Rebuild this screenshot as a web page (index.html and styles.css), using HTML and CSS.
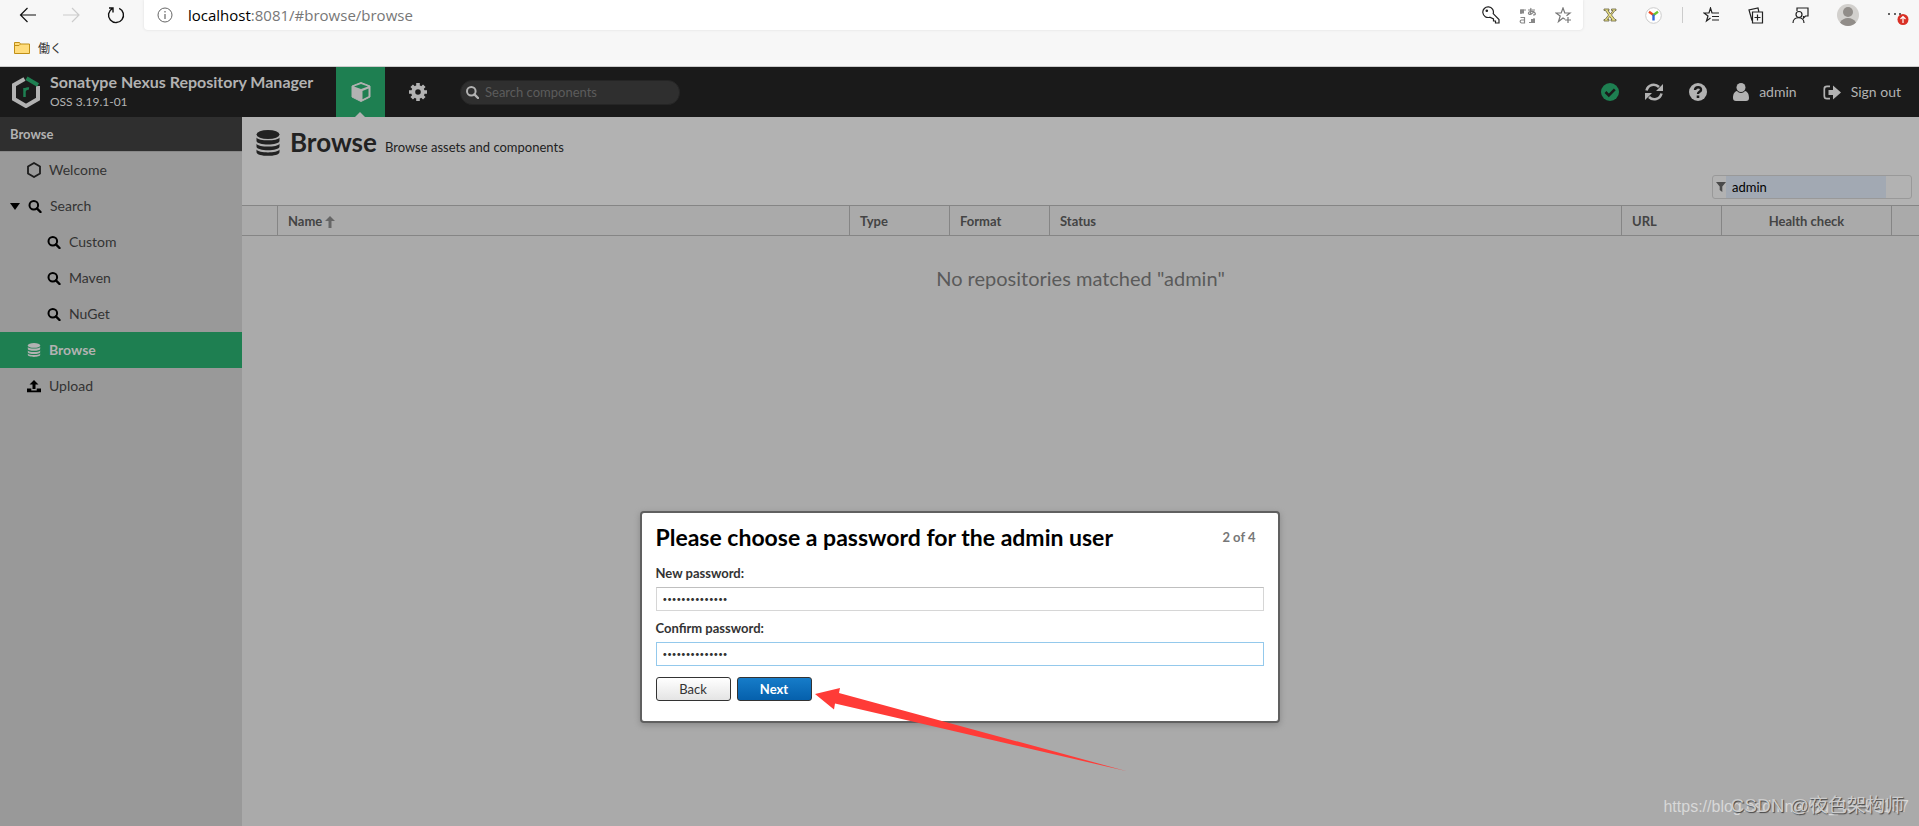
FILE: index.html
```html
<!DOCTYPE html>
<html lang="en">
<head>
<meta charset="utf-8">
<title>Browse - Nexus Repository Manager</title>
<link rel="stylesheet" href="styles.css">
</head>
<body>
<svg class="defs" width="0" height="0" aria-hidden="true">
  <symbol id="search" viewBox="0 0 13 13"><circle cx="5.3" cy="5.3" r="4.3" fill="none" stroke="currentColor" stroke-width="2"/><path d="M8.4 8.4l3.6 3.6" stroke="currentColor" stroke-width="2.4" stroke-linecap="round"/></symbol>
  <symbol id="db" viewBox="0 0 24 26"><g fill="currentColor"><ellipse cx="12" cy="4.5" rx="11.5" ry="4.5"/><path d="M.5 7.5c2 3.8 21 3.800 23 0v3.200c0 5-23 5-23 0zM.5 13.700c2 3.800 21 3.800 23 0v2.800c0 5-23 5-23 0zM.5 19.600c2 3.800 21 3.800 23 0v2.300c0 5.200-23 5.200-23 0z"/></g></symbol>
</svg>

<div class="browser">
  <div class="toolbar">
    <div class="nav">
      <button aria-label="Back"><svg width="18" height="16" viewBox="0 0 18 16" fill="none" stroke="#111" stroke-width="1.2"><path d="M17 8H2M8.500 1L1.500 8l7 7"/></svg></button>
      <button aria-label="Forward"><svg width="18" height="16" viewBox="0 0 18 16" fill="none" stroke="#ccc" stroke-width="1.2"><path d="M0 8h15M9 1l7 7-7 7"/></svg></button>
      <button aria-label="Reload"><svg width="18" height="18" viewBox="0 0 18 18" fill="none" stroke="#111" stroke-width="1.4"><path d="M12.200 2.300a7.500 7.500 0 1 1-7 .300M2 2h4v4.500"/></svg></button>
    </div>
    <div class="address">
      <svg width="16" height="16" viewBox="0 0 16 16" fill="none" stroke="#666"><circle cx="8" cy="8" r="7"/><path d="M8 7v5M8 4v1.500" stroke-width="1.2"/></svg>
      <a class="url" href="#browse/browse"><b>localhost</b>:8081/#browse/browse</a>
      <div class="address-tools">
        <svg width="18" height="18" viewBox="0 0 18 18" fill="none" stroke="#222" stroke-width="1.200"><path d="M7.800 11.200a5.300 5.300 0 1 1 3.400-3.500L17 13.500V17h-3.500v-2H11.500v-2z"/><circle cx="4.800" cy="4.800" r=".7"/></svg>
        <svg width="17" height="17" viewBox="0 0 17 17" fill="none" stroke="#888" stroke-width="1.200"><path d="M2 7V3h5M9 3h7M12 1c-1 3-.5 5 0 6.500M15 4c-1 3-5 4.500-5.500 2.500s4-3 6-1 0 2.500-1.500 2.500M1.500 10.500h4v5.500h-3c-2-.5-1.500-3 0-3h3M10 15.500h5V11"/><path d="M1 2.500h4v4H1zM12 12h4v4h-4z" fill="#888" stroke="none"/></svg>
        <svg width="17" height="17" viewBox="0 0 17 17" fill="none" stroke="#777" stroke-width="1.200"><path d="M10 12.200L8 11l-4.500 3.500 1.700-5.500L1 6h5.200L8 1l1.800 5H15l-3.500 2.800M10 13h6M13 10v6"/></svg>
      </div>
    </div>
    <div class="extensions">
      <svg width="14" height="14" viewBox="0 0 14 14"><path d="M1 1h5v1.500H5L7.500 6 10 2.500H8.500V1H13v1.500h-1L8.500 7l3.500 4.500h1V13H8v-1.500h1L6.700 8.500 4.500 11.500H6V13H1v-1.500h1L5.600 7 2.500 2.500H1z" fill="#e8df83" stroke="#665f43" stroke-width=".8"/></svg>
      <svg width="17" height="17" viewBox="0 0 17 17" fill="none" stroke-width="2.400"><circle cx="8.500" cy="8.500" r="7.800" fill="#fff" stroke="#ccc" stroke-width="1"/><path d="M8.500 8L4 4.800" stroke="#f04a23"/><path d="M8.500 8L13 4.800" stroke="#6cc62f"/><path d="M8.500 7.500v6" stroke="#3468dc"/></svg>
      <span class="divider"></span>
      <svg width="17" height="16" viewBox="0 0 17 16" fill="none" stroke="#222" stroke-width="1.200"><path d="M7.500 11L3.500 14 5 9 1 6h5l1.500-5L9 6h7M9 9.500h7M9 13h7"/></svg>
      <svg width="16" height="17" viewBox="0 0 16 17" fill="none" stroke="#222" stroke-width="1.200"><path d="M4 13.500L1 3l9-2 .8 3.500M4.500 5h10v11h-10zM9.500 7.500v6M6.500 10.500h6"/></svg>
      <svg width="17" height="17" viewBox="0 0 17 17" fill="none" stroke="#222" stroke-width="1.200"><path d="M5 4V1h11v8h-2.500l-2 2V9"/><circle cx="7" cy="7.500" r="3"/><path d="M1 16c0-7 11-7 11 0"/></svg>
      <svg width="22" height="22" viewBox="0 0 22 22"><circle cx="11" cy="11" r="11" fill="#d2d0cd"/><circle cx="11" cy="8" r="5" fill="#918d89"/><path d="M3 18.500c3-6 13-6 16 0a11 11 0 0 1-16 0" fill="#918d89"/></svg>
      <svg width="22" height="22" viewBox="0 0 22 22"><g fill="#333"><circle cx="2" cy="10" r="1"/><circle cx="8" cy="10" r="1"/><circle cx="13" cy="10" r="1"/></g><circle cx="16" cy="15.500" r="5.500" fill="#d93025"/><path d="M16 19v-6M13.500 15l2.500-2.500 2.500 2.500" fill="none" stroke="#fff" stroke-width="1.200"/></svg>
    </div>
  </div>
  <div class="bookmarks">
    <svg width="16" height="12" viewBox="0 0 16 12"><path d="M.5 11.500V.5h5l1 1.500h9v9.500z" fill="#ffdc7c" stroke="#c08f16"/><path d="M.5 3.500H5L6.500 2" fill="none" stroke="#c08f16"/></svg>
    <span>働く</span>
  </div>
</div>

<header class="header">
  <svg class="logo" width="28" height="32" viewBox="0 0 28 32" fill="none" stroke-width="4"><path d="M12.500 3L2 9v14l12 7 12-7V10" stroke="#b2b2b2"/><path d="M14.500 2.300L26 9" stroke="#1e7f51"/><path d="M12.500 21v-9M12.500 15q1-3 4.500-2.500" stroke="#1e7f51" stroke-width="2.500"/></svg>
  <div class="product"><strong>Sonatype Nexus Repository Manager</strong><span>OSS 3.19.1-01</span></div>
  <button class="mode active" aria-label="Browse mode"><svg width="20" height="20" viewBox="0 0 20 20"><path d="M10 .5l9 3.500v11l-9 4.500L1 15V4z" fill="#b2b2b2" stroke="#b2b2b2" stroke-linejoin="round"/><path d="M3 4.500L10 2l7 2.500L10 7z" fill="#1e7f51"/><path d="M11.500 9l6-2.500v7.700l-6 3z" fill="#1e7f51"/></svg></button>
  <button class="mode" aria-label="Administration"><svg width="18" height="18" viewBox="0 0 18 18"><circle cx="9" cy="9" r="4.800" fill="none" stroke="#b2b2b2" stroke-width="4"/><path d="M9 0v4M9 14v4M0 9h4M14 9h4M2.700 2.700l2.500 2.500M12.800 12.800l2.500 2.500M15.300 2.700l-2.500 2.500M5.200 12.800l-2.500 2.500" stroke="#b2b2b2" stroke-width="3.600"/></svg></button>
  <label class="search"><svg width="13" height="13"><use href="#search"/></svg><input type="search" placeholder="Search components" aria-label="Search components"></label>
  <div class="actions">
    <button aria-label="Status"><svg width="18" height="18" viewBox="0 0 18 18"><circle cx="9" cy="9" r="9" fill="#1e7f51"/><path d="M4.500 9l3.300 3.300L13.800 6.300" fill="none" stroke="#1a1a1a" stroke-width="2.600"/></svg></button>
    <button aria-label="Refresh"><svg width="18" height="18" viewBox="0 0 18 18"><path d="M1.500 7.500C3 1.500 10 0 14 4M16.500 10.500C15 16.500 8 18 4 14" fill="none" stroke="#b2b2b2" stroke-width="2.600"/><path d="M18 1v7h-7zM0 17v-7h7z" fill="#b2b2b2"/></svg></button>
    <button aria-label="Help"><svg width="18" height="18" viewBox="0 0 18 18"><circle cx="9" cy="9" r="9" fill="#b2b2b2"/><path d="M6 7c.3-4 6.500-3.500 6 0-.3 2-3 1.800-3 4" fill="none" stroke="#1a1a1a" stroke-width="2.400"/><path d="M7.700 12.500h2.600V15H7.700z" fill="#1a1a1a"/></svg></button>
    <button><svg width="16" height="18" viewBox="0 0 16 18" fill="#b2b2b2"><circle cx="8" cy="4.500" r="4.500"/><path d="M4 8c-3 .5-4 4-4 7 0 2 1 3 3 3h10c2 0 3-1 3-3 0-3-1-6.500-4-7-2 2.500-6 2.500-8 0"/></svg><span>admin</span></button>
    <button><svg width="18" height="15" viewBox="0 0 18 15"><path d="M7 1.300H4Q1.300 1.300 1.300 4v7q0 2.700 2.700 2.700h3" fill="none" stroke="#b2b2b2" stroke-width="1.700"/><path d="M5.500 5H10V.5l8 7-8 7V10H5.500z" fill="#b2b2b2"/></svg><span>Sign out</span></button>
  </div>
</header>

<div class="app">
  <nav class="sidebar">
    <h2>Browse</h2>
    <a href="#welcome"><svg width="14" height="16" viewBox="0 0 14 16"><path d="M7 1l6 3.500v7L7 15l-6-3.500v-7z" fill="none" stroke="#1c1c1c" stroke-width="1.800"/></svg>Welcome</a>
    <a class="parent" href="#search"><svg width="10" height="7" viewBox="0 0 10 7"><path d="M0 0h10L5 7z"/></svg><svg width="14" height="13"><use href="#search"/></svg>Search</a>
    <a class="child" href="#custom"><svg width="14" height="13"><use href="#search"/></svg>Custom</a>
    <a class="child" href="#maven"><svg width="14" height="13"><use href="#search"/></svg>Maven</a>
    <a class="child" href="#nuget"><svg width="14" height="13"><use href="#search"/></svg>NuGet</a>
    <a class="selected" href="#browse"><svg width="14" height="14"><use href="#db"/></svg>Browse</a>
    <a href="#upload"><svg width="14" height="13" viewBox="0 0 14 13"><path d="M7 0l4.500 4.500H8.500V9h-3V4.500h-3zM0 8.500h4.300v2h5.400v-2H14v3.800H0z"/></svg>Upload</a>
  </nav>
  <main class="content">
    <div class="title"><svg width="24" height="26"><use href="#db"/></svg><h1>Browse</h1><span>Browse assets and components</span></div>
    <div class="filter-row">
      <label class="filter"><svg width="10" height="10" viewBox="0 0 10 10"><path d="M0 0h10L6.300 4.500V10L3.700 8V4.500z" fill="#4a4a4a"/></svg><input type="text" value="admin" aria-label="Filter"></label>
    </div>
    <table>
      <colgroup><col class="c-icon"><col><col class="c-small"><col class="c-small"><col><col class="c-small"><col class="c-health"><col class="c-end"></colgroup>
      <thead><tr><th></th><th>Name <svg width="10" height="12" viewBox="0 0 10 12"><path d="M5 0l5 5H6.500v7h-3V5H0z" fill="#666"/></svg></th><th>Type</th><th>Format</th><th>Status</th><th>URL</th><th class="center">Health check</th><th></th></tr></thead>
    </table>
    <p class="empty">No repositories matched "admin"</p>
  </main>
</div>

<div class="overlay">
  <form class="dialog" role="dialog" aria-labelledby="dialog-title">
    <div class="dialog-head"><h2 id="dialog-title">Please choose a password for the admin user</h2><span>2 of 4</span></div>
    <label for="new">New password:</label>
    <input id="new" type="password" value="abcdefghijklmn">
    <label for="confirm">Confirm password:</label>
    <input id="confirm" class="focused" type="password" value="abcdefghijklmn">
    <div class="buttons"><button type="button">Back</button><button type="button" class="primary">Next</button></div>
    <svg class="pointer" width="312" height="84" viewBox="0 0 312 84"><path d="M0 6L25 0l-1 5L311 83 20 15.500 19 21.500z" fill="#ff3b37"/></svg>
  </form>
</div>
<div class="mark mark-url">https://blog.csdn.net/qq_43753157</div>
<div class="mark mark-name">CSDN @夜色架构师</div>
</body>
</html>
```
FILE: styles.css
```css
* { box-sizing: border-box; }
body { margin: 0; min-height: 100vh; display: flex; flex-direction: column; position: relative; overflow: hidden; background: #aaa; font: 14px/18px Lato, "Noto Sans CJK SC", sans-serif; color: #333; }
h1, h2, p { margin: 0; }
svg { display: block; flex: none; }
button, input { font: inherit; color: inherit; }
button { padding: 0; border: 0; background: none; }
a { color: inherit; text-decoration: none; }
.defs { position: absolute; }

.browser { background: #f7f7f7; border-bottom: 1px solid #ccc; height: 67px; }
.toolbar { display: flex; height: 30px; }
.nav { display: flex; align-items: center; gap: 26px; padding-left: 19px; width: 144px; }
.address { flex: 1; display: flex; align-items: center; gap: 15px; padding: 0 11px 0 13px; background: #fff; border-radius: 0 0 4px 4px; box-shadow: 0 0 3px #ddd; }
.url { flex: 1; font: 15px/20px "Open Sans", sans-serif; color: #777; }
.url b { font-weight: 400; color: #000; }
.address-tools { display: flex; gap: 19px; align-items: center; }
.extensions { display: flex; align-items: center; gap: 28px; padding: 0 10px 0 20px; }
.divider { width: 1px; height: 16px; margin: 0 -8px; background: #ccc; }
.bookmarks { display: flex; align-items: center; gap: 8px; height: 36px; padding-left: 14px; font: 12px/16px "Noto Sans CJK JP", sans-serif; }

.header { display: flex; align-items: center; height: 50px; padding: 0 18px 0 12px; background: #1a1a1a; color: #b2b2b2; }
.product { display: flex; flex-direction: column; width: 296px; padding-left: 10px; white-space: nowrap; }
.product strong { font-size: 16px; line-height: 20px; }
.product span { font-size: 12px; line-height: 20px; }
.mode { display: flex; align-items: center; justify-content: center; align-self: stretch; width: 49px; margin-right: 8px; position: relative; }
.mode.active { background: #1e7f51; }
.mode.active::after { content: ""; position: absolute; bottom: 0; left: 19px; border: 5px solid transparent; border-top: 0; border-bottom-color: #b2b2b2; }
.search { display: flex; align-items: center; gap: 6px; width: 220px; height: 25px; margin-left: 10px; padding-left: 5px; border: 1px solid #252525; border-radius: 12px; background: #2f2f2f; }
.search input { flex: 1; min-width: 0; padding: 0; border: 0; outline: 0; background: none; font-size: 13px; }
.search input::placeholder { color: #5c5c5c; }
.actions { display: flex; align-items: center; gap: 26px; margin-left: auto; }
.actions button { display: flex; align-items: center; gap: 10px; }

.app { display: flex; flex: 1; }
.sidebar { width: 242px; background: #999; }
.sidebar h2 { height: 35px; padding-left: 10px; border-bottom: 1px solid #888; background: #2f2f2f; color: #b2b2b2; font-size: 13px; line-height: 34px; }
.sidebar a { display: flex; align-items: center; gap: 8px; height: 36px; padding-left: 27px; }
.sidebar .parent { padding-left: 10px; }
.sidebar .child { padding-left: 47px; }
.sidebar svg { color: #000; }
.sidebar .selected, .sidebar .selected svg { color: #b2b2b2; }
.sidebar .selected { background: #1e7f51; font-weight: 700; }
.content { flex: 1; min-width: 0; background: #aaa; }
.title { display: flex; align-items: baseline; height: 53px; padding: 8px 14px 0; background: #b2b2b2; color: #222; }
.title svg { align-self: flex-start; margin: 5px 10px 0 0; }
.title h1 { font-size: 26px; line-height: 34px; }
.title span { margin-left: 8px; font-size: 13px; }
.filter-row { display: flex; justify-content: flex-end; height: 35px; padding: 5px 7px 0 0; background: #b2b2b2; }
.filter { display: flex; align-items: center; width: 200px; height: 24px; padding-left: 3px; border: 1px solid #999; border-radius: 3px; }
.filter input { width: 160px; height: 22px; padding: 0 6px; border: 0; background: #a2a9b3; color: #000; font-size: 13px; }
table { width: 100%; table-layout: fixed; border-collapse: separate; border-spacing: 0; }
.c-icon { width: 36px; }
.c-small { width: 100px; }
.c-health { width: 170px; }
.c-end { width: 27px; }
th { height: 31px; padding: 0 10px; border: 1px solid #858585; border-left: 0; text-align: left; font-size: 13px; line-height: 18px; color: #444; }
th:last-child { border-right: 0; }
th svg { display: inline-block; vertical-align: -2px; }
th.center { text-align: center; }
.empty { margin-top: 30px; text-align: center; font-size: 20px; line-height: 24px; color: #5a5a5a; }

.overlay { position: absolute; inset: 0; display: flex; align-items: flex-end; justify-content: center; padding-bottom: 103px; }
.dialog { position: relative; width: 640px; padding: 10px 14px 20px; border: 2px solid #606060; border-radius: 4px; background: #fff; box-shadow: 0 2px 6px #888; }
.dialog-head { display: flex; align-items: center; justify-content: space-between; padding-right: 8px; margin-bottom: 10px; }
.dialog-head h2 { font-size: 23px; line-height: 28px; color: #000; }
.dialog-head span { font-size: 13px; font-weight: 700; color: #777; }
.dialog label { display: block; font-size: 13px; font-weight: 700; line-height: 24px; }
.dialog input { display: block; width: 100%; height: 24px; margin: 2px 0 5px; padding: 0 6px; border: 1px solid #d6d6d6; border-top-color: #bfbfbf; outline: 0; font-size: 8px; }
.dialog .focused { border-color: #94c9ec; margin-bottom: 11px; }
.buttons { display: flex; gap: 6px; }
.buttons button { width: 75px; height: 24px; border: 1px solid #333; border-radius: 3px; background: linear-gradient(#fff, #e4e4e4); font-size: 13px; }
.buttons .primary { background: linear-gradient(#167cc9, #0560ac); color: #fff; font-weight: 700; }
.pointer { position: absolute; left: 173px; top: 175px; }
.mark { position: absolute; white-space: nowrap; }
.mark-url { right: 10px; bottom: 9px; font: 16px/20px "Liberation Sans", sans-serif; color: #d8d8d8; }
.mark-name { right: 15px; bottom: 8px; font: 19px/24px "Liberation Sans", "Noto Sans CJK SC", sans-serif; color: #ccc; text-shadow: 1px 1px 1px #444; }
```
